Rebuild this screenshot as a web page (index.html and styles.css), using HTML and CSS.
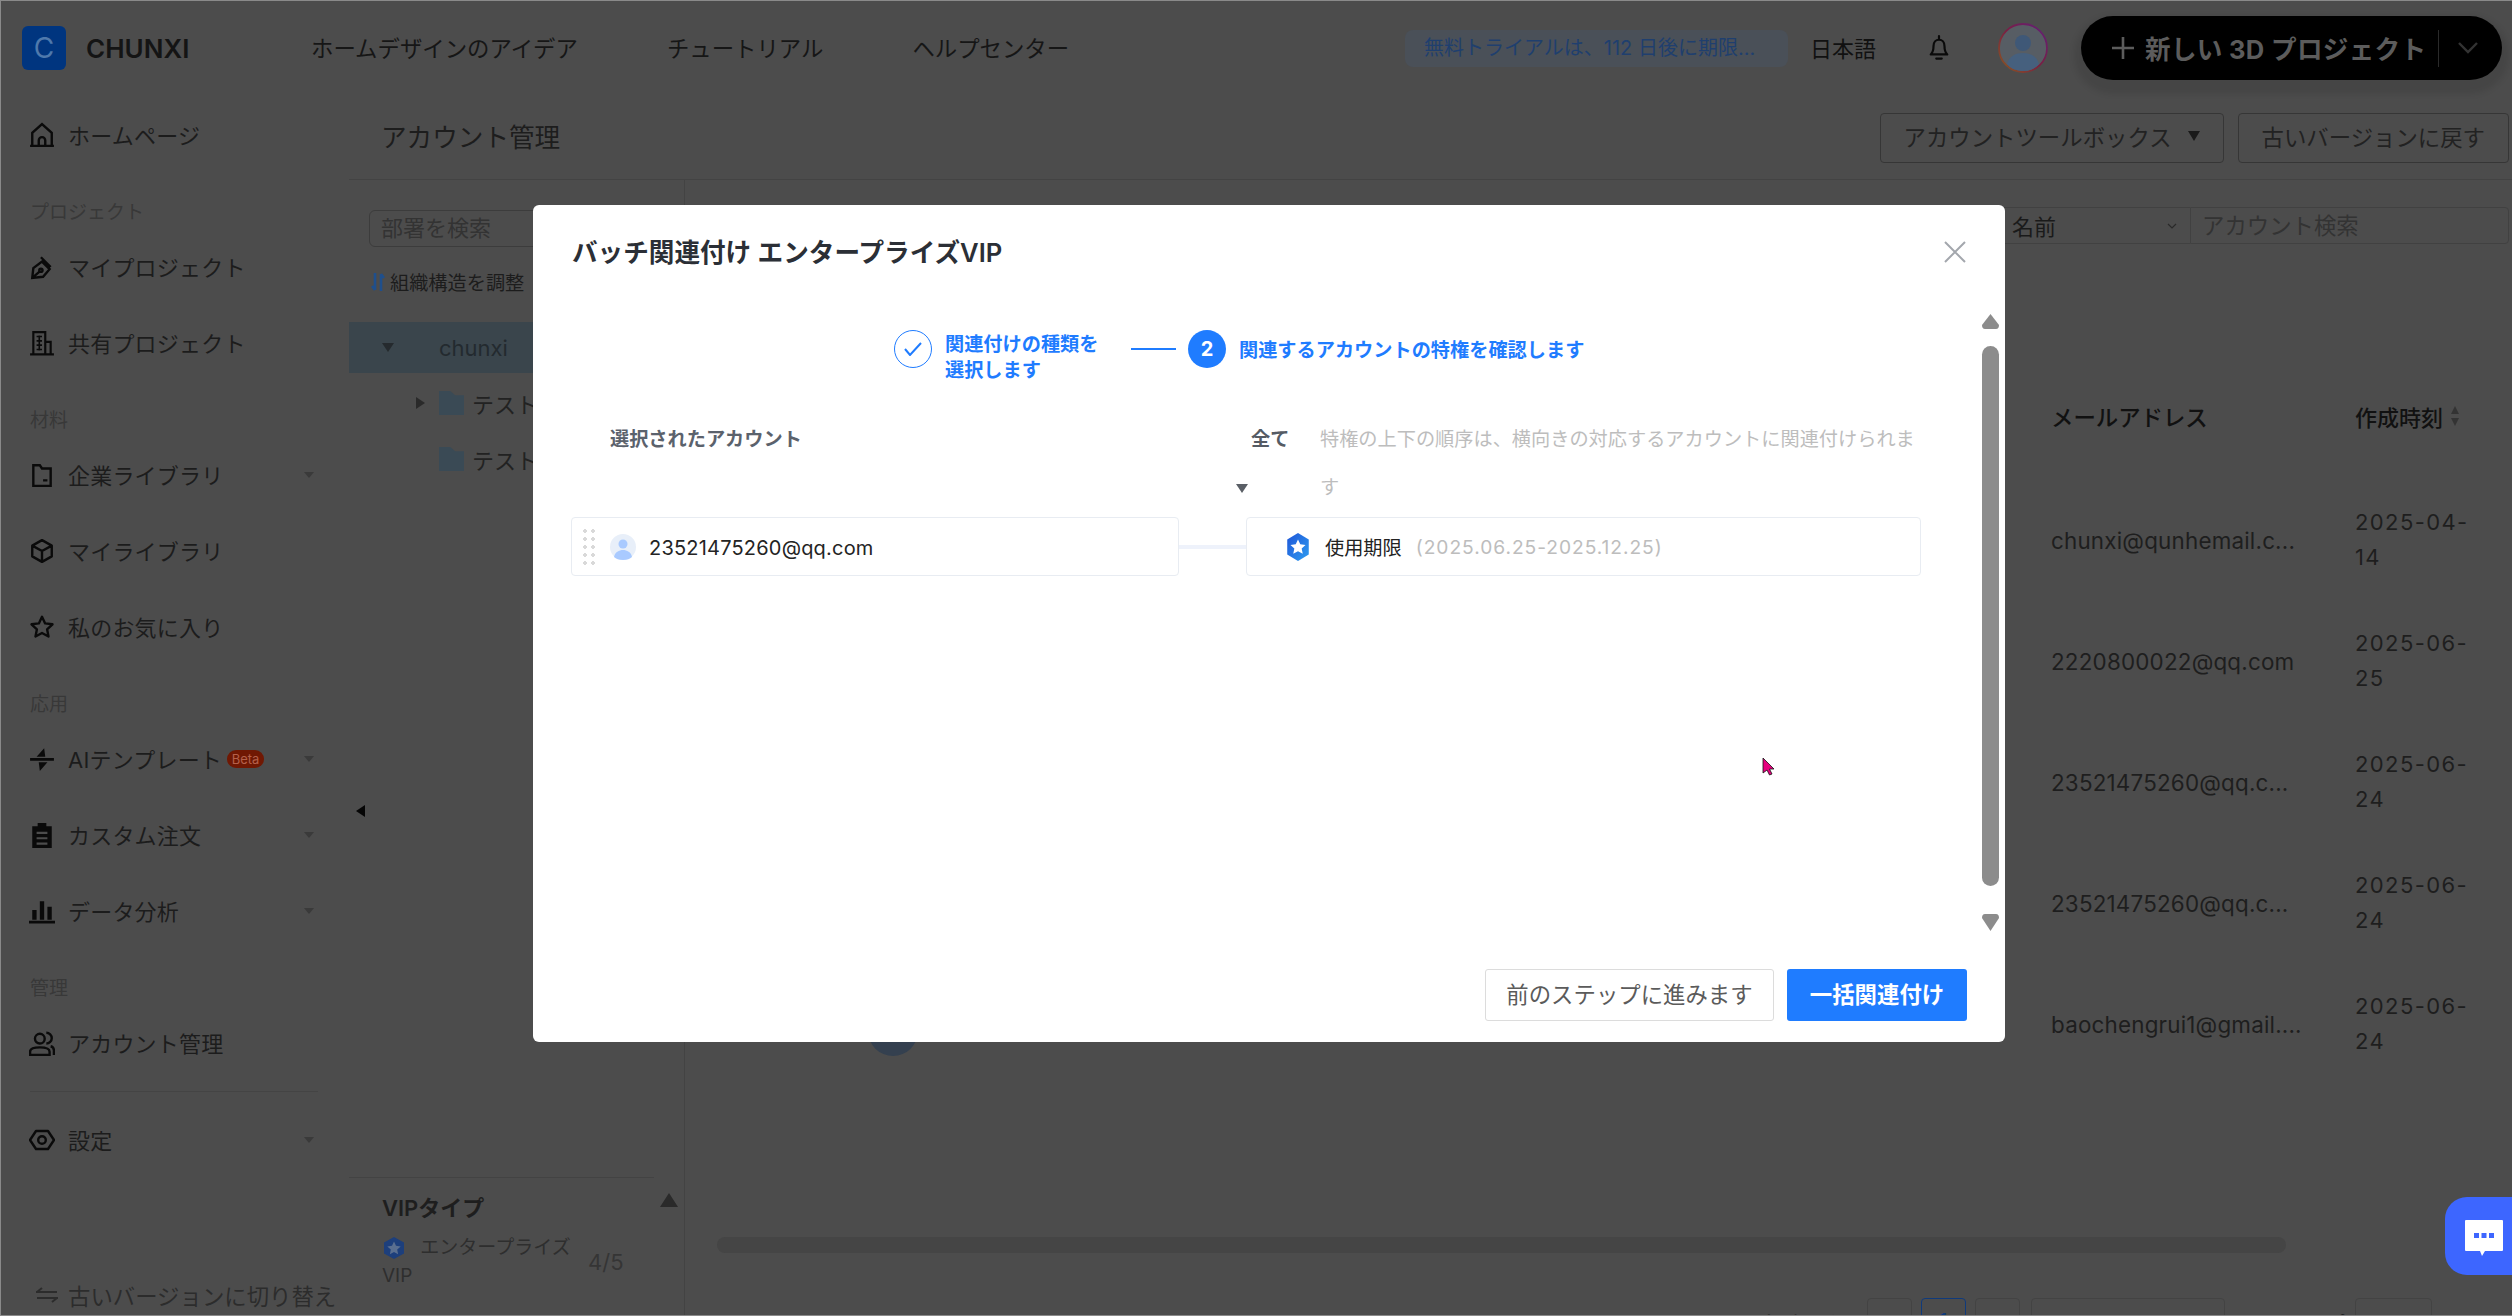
FILE: index.html
```html
<!DOCTYPE html>
<html lang="ja">
<head>
  <meta charset="UTF-8">
  <title>アカウント管理</title>
  <link rel="stylesheet" href="styles.css">
</head>
<body>
<div class="app">
  <!-- top bar -->
  <header class="top-bar">
    <div class="brand">
      <div class="logo">C</div>
      <div class="brand-name">CHUNXI</div>
    </div>
    <nav class="top-nav">
      <a>ホームデザインのアイデア</a>
      <a>チュートリアル</a>
      <a>ヘルプセンター</a>
    </nav>
    <div class="top-right">
      <div class="trial-pill">無料トライアルは、112 日後に期限...</div>
      <div class="lang">日本語</div>
      <svg class="bell" viewBox="0 0 24 30" width="22" height="28" fill="none" stroke="#0a0a0a" stroke-width="2.4"><path d="M3 22c2-2 3-4 3-9 0-4 2.500-7 6-7s6 3 6 7c0 5 1 7 3 9z" stroke-linejoin="round"/><path d="M12 2v3M9 26.500h6" stroke-linecap="round"/></svg>
      <svg class="avatar" viewBox="0 0 50 50" width="50" height="50">
        <defs><linearGradient id="ring" x1="0" y1="1" x2="1" y2="0"><stop offset="0" stop-color="#8a5a1f"/><stop offset=".5" stop-color="#7a1f42"/><stop offset="1" stop-color="#5f1f7c"/></linearGradient></defs>
        <circle cx="25" cy="25" r="24" fill="#575d64" stroke="url(#ring)" stroke-width="1.800"/>
        <circle cx="25" cy="20" r="8" fill="#3f5877"/>
        <path d="M9 41c2-8 9-11 16-11s14 3 16 11c-4 5-10 7-16 7s-12-2-16-7z" fill="#46607e"/>
      </svg>
      <button class="new-project">
        <svg viewBox="0 0 22 22" width="22" height="22" stroke="#5c5c5c" stroke-width="2.600"><path d="M11 0v22M0 11h22"/></svg>
        <span class="new-project-text">新しい 3D プロジェクト</span>
        <i class="new-project-line"></i>
        <svg viewBox="0 0 20 12" width="20" height="12" fill="none" stroke="#333" stroke-width="2.400"><path d="M1 1l9 9 9-9"/></svg>
      </button>
    </div>
  </header>

  <div class="body-row">
    <!-- sidebar -->
    <aside class="sidebar">
      <a class="side-item">
        <svg viewBox="0 0 24 24" width="26" height="26" fill="none" stroke="#0a0a0a" stroke-width="2.200"><path d="M3 22V10l9-8 9 8v12zM9 22v-5a3 3 0 0 1 6 0v5M1 22h22"/></svg>
        <span>ホームページ</span>
      </a>
      <div class="side-label">プロジェクト</div>
      <a class="side-item">
        <svg viewBox="0 0 24 24" width="26" height="26" fill="none" stroke="#0a0a0a" stroke-width="2.200"><path d="M3 22l1-9 8-6 7 7-6 7zM3 22l7-6M11 3l9 9"/><circle cx="11" cy="15" r="1.500"/></svg>
        <span>マイプロジェクト</span>
      </a>
      <a class="side-item">
        <svg viewBox="0 0 24 24" width="26" height="26" fill="none" stroke="#0a0a0a" stroke-width="2"><path d="M4 22V2h11v20M15 11h5v11M1 22.500h22"/><path d="M7 6h5M7 10h5M7 14h5M7 18h5M9.500 5v14" stroke-width="1.500"/></svg>
        <span>共有プロジェクト</span>
      </a>
      <div class="side-label">材料</div>
      <a class="side-item">
        <svg viewBox="0 0 24 24" width="26" height="26" fill="none" stroke="#0a0a0a" stroke-width="2.200"><path d="M4 22V3h6l2 3h8v16zM13 17h4"/></svg>
        <span>企業ライブラリ</span><i class="side-caret"></i>
      </a>
      <a class="side-item">
        <svg viewBox="0 0 24 24" width="26" height="26" fill="none" stroke="#0a0a0a" stroke-width="2.200" stroke-linejoin="round"><path d="M12 2l9 5v10l-9 5-9-5V7zM3 7l9 5 9-5M12 12v10"/></svg>
        <span>マイライブラリ</span>
      </a>
      <a class="side-item">
        <svg viewBox="0 0 24 24" width="26" height="26" fill="none" stroke="#0a0a0a" stroke-width="2.200" stroke-linejoin="round"><path d="M12 2.500l2.900 6.200 6.800.8-5 4.600 1.300 6.700L12 17.500l-6 3.300 1.300-6.700-5-4.600 6.800-.8z"/></svg>
        <span>私のお気に入り</span>
      </a>
      <div class="side-label">応用</div>
      <a class="side-item">
        <svg viewBox="0 0 24 24" width="26" height="26" fill="#0a0a0a"><path d="M1 11h22v2.500H1zM14 2l-7 8h8zM10 23l7-8H9z"/></svg>
        <span>AIテンプレート</span><b class="beta">Beta</b><i class="side-caret"></i>
      </a>
      <a class="side-item">
        <svg viewBox="0 0 24 24" width="26" height="26" fill="#0a0a0a"><path d="M3 4h5V1h8v3h5v20H3zM7 9v2h10V9zm0 5v2h10v-2zm0 5v2h10v-2z" fill-rule="evenodd"/></svg>
        <span>カスタム注文</span><i class="side-caret"></i>
      </a>
      <a class="side-item">
        <svg viewBox="0 0 24 24" width="26" height="26" fill="#0a0a0a"><path d="M3 11h4v9H3zM10 3h4v17h-4zM17 8h4v12h-4zM0 21h24v2.500H0z"/></svg>
        <span>データ分析</span><i class="side-caret"></i>
      </a>
      <div class="side-label">管理</div>
      <a class="side-item">
        <svg viewBox="0 0 24 24" width="26" height="26" fill="none" stroke="#0a0a0a" stroke-width="2.200"><circle cx="10" cy="8" r="4.500"/><path d="M1 23v-3c0-3 3-4 9-4s9 1 9 4v3zM16 2.500a5 5 0 0 1 0 10M20 15c2 .5 3 2 3 4v4"/></svg>
        <span>アカウント管理</span>
      </a>
      <div class="side-divider"></div>
      <a class="side-item">
        <svg viewBox="0 0 26 24" width="26" height="26" fill="none" stroke="#0a0a0a" stroke-width="2.400" stroke-linejoin="round"><path d="M7 3h12l6 9-6 9H7l-6-9z"/><circle cx="13" cy="12" r="3.800"/></svg>
        <span>設定</span><i class="side-caret"></i>
      </a>
      <a class="side-footer">
        <svg viewBox="0 0 24 16" width="24" height="16" fill="none" stroke="#2c2c2c" stroke-width="2"><path d="M1 5h21M7 1L2 5M2 11h21M17 15l5-4"/></svg>
        <span>古いバージョンに切り替え</span>
      </a>
    </aside>

    <main class="main">
      <div class="page-head">
        <div class="page-title">アカウント管理</div>
        <div class="head-actions">
          <button class="ghost-btn tool-btn">アカウントツールボックス<i class="tool-caret"></i></button>
          <button class="ghost-btn">古いバージョンに戻す</button>
        </div>
      </div>

      <div class="panes">
        <!-- department tree -->
        <section class="tree-panel">
          <div class="tree-search">部署を検索</div>
          <div class="tree-adjust">
            <svg viewBox="0 0 14 20" width="14" height="20" fill="none" stroke="#1f4f8c" stroke-width="2.600"><path d="M4 1v17M1 14l3 4M10 19V2M13 6l-3-4"/></svg>
            組織構造を調整
          </div>
          <div class="tree-row tree-root"><i class="caret-down"></i><span>chunxi</span></div>
          <div class="tree-row"><i class="caret-right"></i><i class="folder"></i><span>テスト</span></div>
          <div class="tree-row"><i class="folder"></i><span>テスト</span></div>
          <i class="collapse-tab"></i>
          <div class="vip-box">
            <div class="vip-title">VIPタイプ</div>
            <i class="vip-up"></i>
            <div class="vip-line">
              <div class="vip-name">
                <svg class="vip-icon" viewBox="0 0 24 24" width="24" height="24"><path d="M12 1l10 5.500v11L12 23 2 17.500v-11z" fill="#1d3f7c"/><path d="M12 5.500l2 4.300 4.700.6-3.500 3.200.9 4.700L12 16l-4.100 2.300.9-4.700-3.500-3.200 4.700-.6z" fill="#5a6f90"/></svg>
                エンタープライズ VIP
              </div>
              <div class="vip-count">4/5</div>
            </div>
          </div>
        </section>

        <!-- account table -->
        <section class="table-panel">
          <div class="filters">
            <div class="filter-select"><span>名前</span><svg viewBox="0 0 10 6" width="10" height="6" fill="none" stroke="#2a2a2a" stroke-width="1.200"><path d="M1 1l4 4 4-4"/></svg></div>
            <div class="filter-input">アカウント検索</div>
          </div>
          <div class="table-row table-head">
            <div></div><div></div>
            <div>メールアドレス</div>
            <div class="sort-cell">作成時刻<svg viewBox="0 0 10 22" width="10" height="22" fill="#333"><path d="M5 1l4 8H1zM5 21l-4-8h8z"/></svg></div>
          </div>
          <div class="table-row"><div></div><div><i class="user-dot"></i></div><div>chunxi@qunhemail.c...</div><div class="date">2025-04-14</div></div>
          <div class="table-row"><div></div><div><i class="user-dot"></i></div><div>2220800022@qq.com</div><div class="date">2025-06-25</div></div>
          <div class="table-row"><div></div><div><i class="user-dot"></i></div><div>23521475260@qq.c...</div><div class="date">2025-06-24</div></div>
          <div class="table-row"><div></div><div><i class="user-dot"></i></div><div>23521475260@qq.c...</div><div class="date">2025-06-24</div></div>
          <div class="table-row"><div></div><div><i class="user-dot"></i></div><div>baochengrui1@gmail....</div><div class="date">2025-06-24</div></div>
          <div class="h-scroll"></div>
          <div class="pager">
            <span class="pager-total">合計 5 個</span>
            <span class="pager-box"></span>
            <span class="pager-box pager-on">1</span>
            <span class="pager-box"></span>
            <span class="pager-size">20 / ページ</span>
            <span class="pager-jump">ステップ</span>
            <span class="pager-input"></span>
            <span>ページ</span>
          </div>
        </section>
      </div>
    </main>
  </div>

  <!-- chat widget -->
  <div class="chat-btn">
    <svg viewBox="0 0 38 36" width="38" height="36"><path d="M1 0h36a1 1 0 0 1 1 1v29a1 1 0 0 1-1 1H20l-3 5-2-5H1a1 1 0 0 1-1-1V1a1 1 0 0 1 1-1z" fill="#fff"/><path d="M9 13h5v5H9zM16.500 13h5v5h-5zM24 13h5v5h-5z" fill="#3d66ff"/></svg>
  </div>

  <!-- modal -->
  <div class="modal">
    <div class="modal-head">
      <div class="modal-title">バッチ関連付け エンタープライズVIP</div>
      <svg viewBox="0 0 24 24" width="24" height="24" stroke="#a3a7ad" stroke-width="2"><path d="M2 2l20 20M22 2L2 22"/></svg>
    </div>

    <div class="steps">
      <div class="step-circle step-done">
        <svg viewBox="0 0 18 14" width="18" height="14" fill="none" stroke="#1f7cff" stroke-width="2"><path d="M1 7l5 6L17 1"/></svg>
      </div>
      <div class="step-text step-first">関連付けの種類を選択します</div>
      <i class="step-line"></i>
      <div class="step-circle step-now">2</div>
      <div class="step-text step-second">関連するアカウントの特権を確認します</div>
    </div>

    <div class="map-head">
      <div class="map-left-title">選択されたアカウント</div>
      <div class="map-right-title">
        <div class="map-all"><span>全て</span><i class="all-caret"></i></div>
        <div class="map-hint">特権の上下の順序は、横向きの対応するアカウントに関連付けられます</div>
      </div>
    </div>

    <div class="map-row">
      <div class="map-left">
        <div class="map-card account-card">
          <i class="drag-dots"></i>
          <svg viewBox="0 0 26 26" width="26" height="26"><circle cx="13" cy="13" r="13" fill="#e8eff9"/><circle cx="13" cy="10" r="4.500" fill="#a9caff"/><path d="M4 23c1-5 5-7 9-7s8 2 9 7c-2 2-5 3-9 3s-7-1-9-3z" fill="#a9caff"/></svg>
          <span class="account-mail">23521475260@qq.com</span>
        </div>
        <i class="map-link"></i>
      </div>
      <div class="map-card right-card">
        <svg viewBox="0 0 24 26" width="26" height="28">
          <defs><linearGradient id="hexFill" x1="0" y1="0" x2="1" y2="1"><stop offset="0" stop-color="#1e55d8"/><stop offset="1" stop-color="#2f9df0"/></linearGradient></defs>
          <path d="M12 0l10 6v14l-10 6-10-6V6z" fill="url(#hexFill)"/><path d="M12 6l2.100 4.500 4.900.6-3.600 3.300 1 4.900L12 16.900l-4.400 2.400 1-4.900L5 11.100l4.900-.6z" fill="#fff"/>
        </svg>
        <span class="right-name">使用期限</span>
        <span class="right-date">(2025.06.25-2025.12.25)</span>
      </div>
    </div>

    <div class="modal-foot">
      <button class="btn-prev">前のステップに進みます</button>
      <button class="btn-main">一括関連付け</button>
    </div>

    <div class="modal-scroll">
      <i class="scroll-up"></i>
      <i class="scroll-thumb"></i>
      <i class="scroll-down"></i>
    </div>

    <svg class="mouse" viewBox="0 0 13 19" width="13" height="19"><path d="M1 1v15l4-3 2.500 5 2.500-1-2.500-5H12z" fill="#e6007e" stroke="#111" stroke-width=".8"/></svg>
  </div>
</div>
</body>
</html>
```

FILE: styles.css
```css
/* GENERAL */
* {
  box-sizing: border-box;
}

body {
  margin: 0;
  overflow: hidden;
  background: #4c4c4c;
  font-family: 'Inter', 'Noto Sans CJK JP', sans-serif;
  color: #1a1a1a;
}

i {
  display: block;
}

button {
  font-family: inherit;
  cursor: pointer;
}

.app {
  position: relative;
  width: 2512px;
  height: 1316px;
  overflow: hidden;
  display: flex;
  flex-direction: column;
  background: #4c4c4c;
  border: 1px solid #8a8a8a;
  border-right: none;
}

/* TOP BAR */
.top-bar {
  height: 95px;
  flex: none;
  display: flex;
  align-items: center;
  padding-bottom: 1px;
}

.brand {
  width: 310px;
  padding-left: 21px;
  display: flex;
  align-items: center;
  gap: 20px;
}

.logo {
  width: 44px;
  height: 44px;
  border-radius: 6px;
  background: #00357f;
  color: #4f79ac;
  font-size: 28px;
  text-align: center;
  line-height: 44px;
}

.brand-name {
  font-size: 26px;
  font-weight: 600;
  color: #141414;
}

.top-nav {
  display: flex;
  gap: 89px;
  font-size: 22.4px;
  color: #161616;
  padding-bottom: 2px;
}

.top-right {
  margin-left: auto;
  display: flex;
  align-items: center;
  padding-right: 10px;
}

.trial-pill {
  width: 383px;
  height: 37px;
  border-radius: 8px;
  background: #4a5058;
  color: #1f3f6e;
  font-size: 20px;
  line-height: 37px;
  padding-left: 19px;
  white-space: nowrap;
}

.lang {
  margin-left: 22px;
  font-size: 22px;
  color: #111;
  padding-bottom: 2px;
}

.bell {
  margin-left: 52px;
}

.avatar {
  margin-left: 48px;
}

.new-project {
  margin-left: 33px;
  width: 421px;
  height: 64px;
  border: none;
  border-radius: 32px;
  background: #000;
  box-shadow: 0 7px 6px 7px rgba(0, 0, 0, 0.09);
  display: flex;
  align-items: center;
  padding: 0 24px 0 31px;
  color: #5c5c5c;
  font-size: 25.6px;
  font-weight: 700;
}

.new-project-text {
  margin-left: 11px;
  white-space: nowrap;
  letter-spacing: 0.3px;
  padding-bottom: 2px;
}

.new-project-line {
  width: 1px;
  height: 37px;
  background: #2a2a2a;
  margin-left: auto;
  margin-right: 19px;
}

/* LAYOUT */
.body-row {
  flex: 1;
  display: flex;
  min-height: 0;
}

/* SIDEBAR */
.sidebar {
  width: 348px;
  flex: none;
  padding-top: 1px;
  display: flex;
  flex-direction: column;
  position: relative;
}

.side-item {
  height: 76px;
  flex: none;
  width: 313px;
  padding-left: 28px;
  display: flex;
  align-items: center;
  font-size: 22px;
  color: #1c1c1c;
  letter-spacing: 0.2px;
  white-space: nowrap;
}

.side-item span {
  margin: 0 0 3px 13px;
}

.side-label {
  height: 36px;
  flex: none;
  margin-top: 20px;
  padding: 2px 0 0 29px;
  line-height: 36px;
  font-size: 19px;
  color: #383838;
}

.side-caret {
  margin-left: auto;
  width: 0;
  height: 0;
  border-left: 5px solid transparent;
  border-right: 5px solid transparent;
  border-top: 6px solid #3a3a3a;
}

.beta {
  margin-left: 5px;
  width: 37px;
  height: 18px;
  line-height: 18px;
  border-radius: 9px;
  background: #701803;
  color: #b5604a;
  font-size: 13px;
  font-weight: 400;
  text-align: center;
  letter-spacing: 0;
}

.side-divider {
  width: 288px;
  height: 1px;
  flex: none;
  margin: 10px 0 10px 29px;
  background: #444;
}

.side-footer {
  position: absolute;
  left: 34px;
  bottom: 1px;
  height: 38px;
  display: flex;
  align-items: center;
  gap: 9px;
  font-size: 22.4px;
  color: #2c2c2c;
  white-space: nowrap;
}

/* MAIN */
.main {
  flex: 1;
  min-width: 0;
  display: flex;
  flex-direction: column;
}

.page-head {
  height: 84px;
  flex: none;
  display: flex;
  align-items: center;
  justify-content: space-between;
  padding: 0 3px 0 32px;
  border-bottom: 1px solid #434343;
}

.page-title {
  font-size: 25.6px;
  color: #1d1d1d;
  padding-bottom: 4px;
}

.head-actions {
  display: flex;
  gap: 14px;
}

.ghost-btn {
  height: 50px;
  padding: 0 23px 3px;
  background: none;
  border: 1px solid #363636;
  border-radius: 4px;
  font-size: 22.4px;
  color: #222;
  white-space: nowrap;
}

.tool-btn {
  display: flex;
  align-items: center;
  gap: 16px;
}

.tool-caret {
  width: 0;
  height: 0;
  border-left: 6px solid transparent;
  border-right: 6px solid transparent;
  border-top: 10px solid #1a1a1a;
}

.panes {
  flex: 1;
  display: flex;
  min-height: 0;
}

/* TREE */
.tree-panel {
  width: 336px;
  flex: none;
  position: relative;
  display: flex;
  flex-direction: column;
  border-right: 1px solid #434343;
}

.tree-search {
  margin: 30px 20px 0;
  height: 37px;
  border: 1px solid #3c3c3c;
  border-radius: 6px;
  padding-left: 11px;
  line-height: 35px;
  font-size: 22px;
  color: #333;
}

.tree-adjust {
  margin: 20px 0 0 22px;
  height: 30px;
  display: flex;
  align-items: center;
  gap: 5px;
  font-size: 19.2px;
  color: #1c1c1c;
}

.tree-row {
  height: 56px;
  display: flex;
  align-items: center;
  padding-left: 90px;
  font-size: 22px;
  color: #222;
  position: relative;
}

.tree-root {
  margin-top: 25px;
  margin-bottom: 2px;
  height: 51px;
  background: #3a454c;
  color: #232a2f;
}

.caret-down {
  position: absolute;
  left: 33px;
  top: 21px;
  border-left: 6px solid transparent;
  border-right: 6px solid transparent;
  border-top: 9px solid #252a2e;
}

.caret-right {
  position: absolute;
  left: 67px;
  top: 22px;
  border-top: 6px solid transparent;
  border-bottom: 6px solid transparent;
  border-left: 9px solid #2a2a2a;
}

.folder {
  width: 25px;
  height: 24px;
  margin-right: 8px;
  background: #3a4a55;
  clip-path: polygon(0 0, 45% 0, 65% 18%, 100% 18%, 100% 100%, 0 100%);
}

.collapse-tab {
  position: absolute;
  left: 7px;
  top: 625px;
  border-top: 6px solid transparent;
  border-bottom: 6px solid transparent;
  border-right: 9px solid #050505;
}

.vip-box {
  margin-top: auto;
  margin-right: 30px;
  height: 138px;
  position: relative;
  padding: 12px 0 0 33px;
  border-top: 1px solid #434343;
  color: #2e2e2e;
}

.vip-title {
  font-size: 22px;
  font-weight: 600;
  color: #1e1e1e;
}

.vip-up {
  position: absolute;
  left: 311px;
  top: 15px;
  border-left: 9px solid transparent;
  border-right: 9px solid transparent;
  border-bottom: 14px solid #2a2a2a;
}

.vip-line {
  display: flex;
  align-items: center;
  margin-top: 12px;
}

.vip-name {
  width: 206px;
  font-size: 19px;
  line-height: 28px;
}

.vip-icon {
  vertical-align: -6px;
  margin-right: 9px;
}

.vip-count {
  font-size: 22px;
  color: #353535;
}

/* TABLE */
.table-panel {
  flex: 1;
  min-width: 0;
}

.filters {
  margin-top: 27px;
  height: 37px;
  display: flex;
  justify-content: flex-end;
  padding-right: 3px;
}

.filter-select {
  width: 190px;
  height: 37px;
  padding: 0 13px 0 11px;
  display: flex;
  align-items: center;
  justify-content: space-between;
  font-size: 22px;
  border: 1px solid #414141;
  border-right: none;
}

.filter-select span {
  padding-bottom: 2px;
}

.filter-input {
  width: 319px;
  height: 37px;
  padding-left: 11px;
  line-height: 36px;
  font-size: 22.4px;
  color: #333;
  border: 1px solid #414141;
  border-radius: 0 4px 4px 0;
}

.table-row {
  height: 121px;
  display: grid;
  grid-template-columns: 183px 1183px 304px 126px;
  align-items: center;
  font-size: 22.4px;
  letter-spacing: 0.2px;
  color: #1e1e1e;
}

.table-head {
  height: 124px;
  margin-top: 112px;
  padding-bottom: 5px;
  font-weight: 500;
  letter-spacing: 0;
  color: #111;
}

.sort-cell {
  display: flex;
  align-items: center;
  gap: 7px;
  white-space: nowrap;
  font-size: 22px;
}

.date {
  font-size: 22px;
  line-height: 35px;
  letter-spacing: 1.4px;
  padding-bottom: 2px;
}

.user-dot {
  width: 50px;
  height: 50px;
  border-radius: 50%;
  background: #34404f;
  margin-top: 13px;
}

.h-scroll {
  width: 1569px;
  height: 16px;
  margin: 152px 0 0 32px;
  border-radius: 8px;
  background: #454545;
}

.pager {
  margin-top: 45px;
  padding-left: 1073px;
  height: 45px;
  display: flex;
  align-items: flex-start;
  font-size: 22px;
  color: #222;
  white-space: nowrap;
}

.pager-total {
  width: 109px;
  padding-top: 9px;
}

.pager-box {
  width: 45px;
  height: 45px;
  margin-right: 9px;
  border: 1px solid #434343;
  border-radius: 4px;
  text-align: center;
  line-height: 45px;
}

.pager-on {
  border-color: #0f3a7c;
  color: #0f3a7c;
}

.pager-size {
  width: 194px;
  height: 45px;
  margin-left: 2px;
  padding: 7px 0 0 12px;
  border: 1px solid #434343;
  border-radius: 4px;
}

.pager-jump {
  margin: 8px 9px 0 33px;
}

.pager-input {
  width: 78px;
  height: 45px;
  margin-right: 14px;
  border: 1px solid #434343;
  border-radius: 4px;
}

.pager span:last-child {
  padding-top: 8px;
}

/* CHAT */
.chat-btn {
  position: absolute;
  right: 0;
  top: 1196px;
  width: 67px;
  height: 78px;
  border-radius: 22px 0 0 22px;
  background: #3d66ff;
  padding: 23px 0 0 20px;
}

/* MODAL */
.modal {
  position: absolute;
  left: 532px;
  top: 204px;
  width: 1472px;
  height: 837px;
  background: #fff;
  border-radius: 6px;
  display: flex;
  flex-direction: column;
  color: #222;
}

.modal-head {
  height: 94px;
  flex: none;
  padding: 0 38px 0 39px;
  display: flex;
  align-items: center;
  justify-content: space-between;
}

.modal-title {
  font-size: 25.6px;
  font-weight: 600;
  color: #2b2f36;
  padding-bottom: 3px;
}

.steps {
  flex: none;
  height: 116px;
  padding: 31px 0 0 361px;
  display: flex;
  align-items: flex-start;
  color: #1f7cff;
  font-size: 19.2px;
  font-weight: 600;
}

.step-circle {
  width: 38px;
  height: 38px;
  flex: none;
  border-radius: 50%;
  display: flex;
  align-items: center;
  justify-content: center;
}

.step-done {
  border: 1.5px solid #1f7cff;
}

.step-now {
  background: #1f7cff;
  color: #fff;
  font-size: 20px;
  font-weight: 700;
}

.step-text {
  margin-left: 13px;
  padding-top: 1px;
}

.step-first {
  width: 160px;
  line-height: 26px;
}

.step-second {
  line-height: 38px;
  white-space: nowrap;
}

.step-line {
  width: 45px;
  height: 2px;
  margin: 18px 12px 0 26px;
  background: #1f7cff;
}

.map-head {
  flex: none;
  height: 102px;
  padding-left: 38px;
  display: flex;
  font-size: 19.2px;
}

.map-left-title {
  width: 675px;
  padding-left: 39px;
  line-height: 48px;
  font-weight: 600;
  color: #5b626c;
}

.map-right-title {
  width: 675px;
  display: flex;
}

.map-all {
  width: 74px;
  padding-left: 5px;
  line-height: 48px;
  font-weight: 600;
  color: #555b64;
}

.all-caret {
  margin: 21px 0 0 -15px;
  width: 0;
  border-left: 6px solid transparent;
  border-right: 6px solid transparent;
  border-top: 9px solid #5a5f66;
}

.map-hint {
  width: 600px;
  line-height: 48px;
  color: #bdbdbd;
}

.map-row {
  flex: none;
  padding-left: 38px;
  display: flex;
}

.map-left {
  width: 675px;
  display: flex;
  align-items: center;
}

.map-card {
  height: 59px;
  border: 1px solid #e8ecf2;
  border-radius: 4px;
  display: flex;
  align-items: center;
  flex: none;
}

.account-card {
  width: 608px;
  padding-left: 11px;
}

.drag-dots {
  width: 12px;
  height: 40px;
  background: radial-gradient(circle, #d9d9d9 1.7px, transparent 2px) -2px 0 / 8px 8px;
}

.account-card svg {
  margin-left: 15px;
}

.account-mail {
  margin: 2px 0 0 13px;
  font-size: 20px;
  letter-spacing: 0.2px;
  color: #242424;
}

.map-link {
  flex: 1;
  height: 4px;
  background: #eef2fb;
}

.right-card {
  width: 675px;
  padding-left: 38px;
  font-size: 19.2px;
}

.right-name {
  margin-left: 14px;
}

.right-date {
  margin-left: 14px;
  letter-spacing: 0.95px;
  color: #bdbdbd;
}

.modal-foot {
  margin-top: auto;
  padding: 0 38px 21px 0;
  display: flex;
  justify-content: flex-end;
  gap: 13px;
}

.modal-foot button {
  height: 52px;
  padding-bottom: 5px;
  border-radius: 3px;
  font-size: 22.4px;
}

.btn-prev {
  width: 289px;
  background: #fff;
  border: 1px solid #dcdcdc;
  color: #5b5b5b;
}

.btn-main {
  width: 180px;
  background: #1f7cff;
  border: none;
  color: #fff;
  font-weight: 600;
}

.modal-scroll {
  position: absolute;
  left: 1449px;
  top: 109px;
  width: 17px;
}

.scroll-up {
  height: 15px;
  background: #8c8c8c;
  clip-path: path('M8.500 0 L17 11 Q17 15 14 15 L3 15 Q0 15 0 11 Z');
}

.scroll-thumb {
  height: 540px;
  margin-top: 17px;
  border-radius: 9px;
  background: #8c8c8c;
}

.scroll-down {
  height: 17px;
  margin-top: 28px;
  background: #8c8c8c;
  clip-path: path('M3 0 L14 0 Q17 0 17 4 L8.500 17 L0 4 Q0 0 3 0 Z');
}

.mouse {
  position: absolute;
  left: 1229px;
  top: 552px;
}
```
